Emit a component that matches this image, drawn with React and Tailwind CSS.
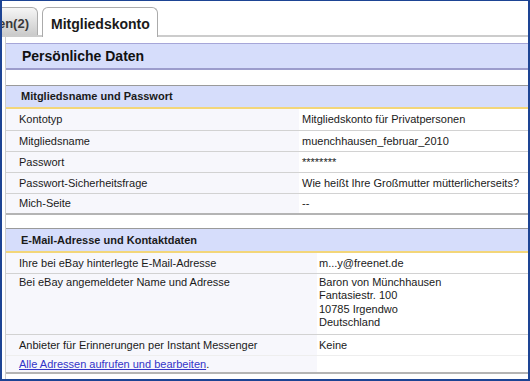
export default function App() {
  const sec1 = [
    ["Kontotyp", "Mitgliedskonto für Privatpersonen"],
    ["Mitgliedsname", "muenchhausen_februar_2010"],
    ["Passwort", "********"],
    ["Passwort-Sicherheitsfrage", "Wie heißt Ihre Großmutter mütterlicherseits?"],
    ["Mich-Seite", "--"],
  ];
  return (
    <div className="w-[530px] h-[381px] overflow-hidden bg-white border-[#1d4494] border-t border-x-2 border-b-2 font-['Liberation_Sans',Arial,sans-serif] text-[11px] text-[#1a1a1a]">
      {/* Tabs */}
      <div className="h-[36px] pt-[6px] flex items-end border-b-2 border-[#cccccc]">
        <div className="h-[28px] w-[36px] flex justify-end pt-[8px] pr-[8px] bg-gradient-to-b from-[#f6f6f6] to-[#cbcbcb] border-t border-r border-[#ababab] rounded-tr-[6px] text-[13px] leading-[16px] font-bold text-[#3a3a3a] whitespace-nowrap overflow-hidden">
          <span className="shrink-0">en(2)</span>
        </div>
        <div className="ml-[4px] -mb-[2px] h-[30px] w-[116px] bg-white border border-b-0 border-[#ababab] rounded-t-[6px] pt-[8px] pl-[8px] text-[14px] leading-[16px] font-bold text-[#1a1a1a] whitespace-nowrap">
          Mitgliedskonto
        </div>
      </div>

      {/* Panel */}
      <div className="ml-[3px] border-l border-[#cccccc] pt-[6px] h-[342px]">
        <div className="h-[27px] border-t border-b-2 border-t-[#a6a6d8] border-b-[#9c9ccc] bg-[#d6ddfb] flex items-center pl-[16px] text-[14px] leading-[16px] font-bold text-[#111]">
          Persönliche Daten
        </div>

        {/* Section 1 */}
        <div className="mt-[15px]">
          <div className="h-[24px] border-t border-b-2 border-t-[#9a9a9a] border-b-[#f3d679] bg-[#d6ddfb] flex items-center pl-[15px] font-bold">
            Mitgliedsname und Passwort
          </div>
          {sec1.map(([l, v], i) => (
            <div
              key={l}
              className={
                "flex " +
                (i === 0 ? "h-[22px] " : "h-[21px] ") +
                (i === sec1.length - 1
                  ? "border-b-2 border-[#b4b4b4]"
                  : "border-b border-[#d2d2d2]")
              }
            >
              <div className="w-[293px] shrink-0 bg-[#f7f7fc] flex items-center pl-[13px]">{l}</div>
              <div className="flex-1 bg-white flex items-center pl-[3px] whitespace-nowrap">{v}</div>
            </div>
          ))}
        </div>

        {/* Section 2 */}
        <div className="mt-[13px]">
          <div className="h-[25px] border-t border-b-2 border-t-[#9a9a9a] border-b-[#f3d679] bg-[#d6ddfb] flex items-center pl-[15px] font-bold">
            E-Mail-Adresse und Kontaktdaten
          </div>
          <div className="flex h-[21px] border-b border-[#d2d2d2]">
            <div className="w-[311px] shrink-0 bg-[#f7f7fc] flex items-center pl-[13px]">Ihre bei eBay hinterlegte E-Mail-Adresse</div>
            <div className="flex-1 bg-white flex items-center pl-[2px]">m...y@freenet.de</div>
          </div>
          <div className="flex h-[61px] border-b border-[#d2d2d2] leading-[13.4px]">
            <div className="w-[311px] shrink-0 bg-[#f7f7fc] pt-[2px] pl-[13px]">Bei eBay angemeldeter Name und Adresse</div>
            <div className="flex-1 bg-white pt-[2px] pl-[2px] flex flex-col">
              <span>Baron von Münchhausen</span>
              <span>Fantasiestr. 100</span>
              <span>10785 Irgendwo</span>
              <span>Deutschland</span>
            </div>
          </div>
          <div className="flex h-[21px] border-b border-[#eeeeee]">
            <div className="w-[311px] shrink-0 bg-[#f7f7fc] flex items-center pl-[13px]">Anbieter für Erinnerungen per Instant Messenger</div>
            <div className="flex-1 bg-white flex items-center pl-[2px]">Keine</div>
          </div>
          <div className="flex h-[18px] border-b-2 border-[#b4b4b4]">
            <div className="w-[311px] shrink-0 bg-[#f7f7fc] flex items-center pl-[13px]">
              <a className="text-[#3434c8] underline">Alle Adressen aufrufen und bearbeiten</a>.
            </div>
            <div className="flex-1 bg-white"></div>
          </div>
        </div>
      </div>
    </div>
  );
}
